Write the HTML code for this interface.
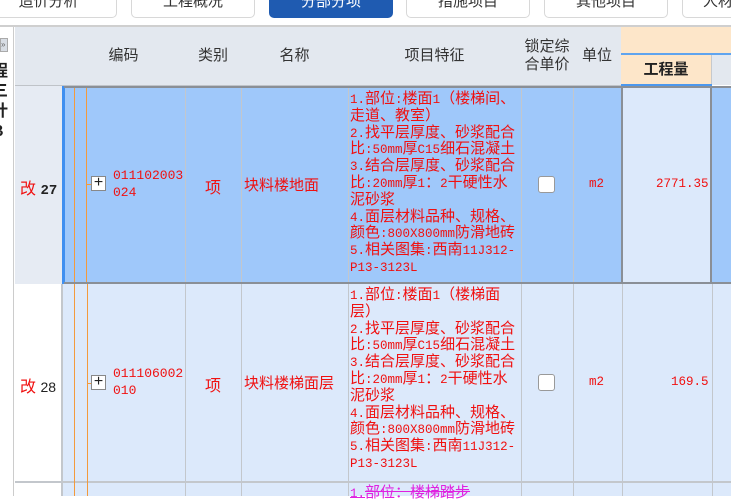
<!DOCTYPE html>
<html><head><meta charset="utf-8"><style>
*{margin:0;padding:0;box-sizing:border-box}
body{width:731px;height:496px;overflow:hidden;background:#fff;position:relative;font-family:"Liberation Sans","Noto Sans CJK SC",sans-serif}
.a{position:absolute}
.tab{position:absolute;top:-12px;height:30px;border:1px solid #d8d8d8;border-radius:5px;background:#fff;font-size:15px;color:#333;text-align:center;line-height:26px}
.hd{position:absolute;background:#e3e8ef;border-right:1px solid #c6c9cd;border-bottom:1px solid #bfc3c8;color:#333;font-size:15px;display:flex;align-items:center;justify-content:center;text-align:center;line-height:18px}
.vl{position:absolute;width:1px;background:#c3c7cc}
.red{color:#f01010}
.ft{position:absolute;left:350px;font-size:15px;color:#f01010;white-space:nowrap;font-family:"Noto Sans CJK SC",sans-serif}
.ft div{height:16.8px;line-height:16.8px;overflow:visible}
.ft i{font-style:normal;font-family:"Liberation Mono",monospace;font-size:12.5px;line-height:10px}
.or{position:absolute;width:1px;background:#f39a3c}
.pb{position:absolute;width:15px;height:15px;border:1px solid #888;background:#fff;font-size:16px;line-height:12px;text-align:center;color:#222}
.cb{position:absolute;width:17px;height:17px;border:1px solid #999;border-radius:3px;background:#fff}
.code{font-family:"Liberation Mono",monospace;font-size:13px;line-height:17px}
</style></head><body>
<div class="tab" style="left:-20px;width:137px">造价分析</div>
<div class="tab" style="left:131px;width:124px">工程概况</div>
<div class="tab" style="left:269px;width:124px;background:#1f5bb1;border-color:#1f5bb1;color:#fff">分部分项</div>
<div class="tab" style="left:406px;width:124px">措施项目</div>
<div class="tab" style="left:544px;width:124px">其他项目</div>
<div class="tab" style="left:682px;width:80px;text-align:left;padding-left:20px">人材</div>
<div class="a" style="left:0;top:25px;width:731px;height:2px;background:#cfcfcf"></div>
<div class="a" style="left:0;top:27px;width:14px;height:469px;background:#fff;border-right:1px solid #ccc"></div>
<div class="a" style="left:0;top:38px;width:8px;height:14px;background:#d8dde4;border:1px solid #aaa;font-size:8px;color:#666;line-height:12px">»</div>
<div class="a" style="left:-8px;top:62px;width:16px;font-size:16px;font-weight:bold;line-height:20px;color:#222">程<br>三<br>计<br>B</div>
<div class="hd" style="left:15px;top:27px;width:48px;height:59px"></div>
<div class="hd" style="left:62px;top:27px;width:124px;height:59px">编码</div>
<div class="hd" style="left:185px;top:27px;width:57px;height:59px">类别</div>
<div class="hd" style="left:241px;top:27px;width:108px;height:59px">名称</div>
<div class="hd" style="left:348px;top:27px;width:174px;height:59px">项目特征</div>
<div class="hd" style="left:521px;top:27px;width:53px;height:59px">锁定综<br>合单价</div>
<div class="hd" style="left:573px;top:27px;width:49px;height:59px">单位</div>
<div class="a" style="left:621px;top:27px;width:110px;height:27px;background:#fde6c9"></div>
<div class="a" style="left:621px;top:53px;width:110px;height:2px;background:#5fa4ef"></div>
<div class="a" style="left:621px;top:55px;width:91px;height:29px;background:#fde6c9;border-right:1px solid #c6c9cd;font-size:15px;font-weight:bold;color:#222;text-align:center;line-height:29px">工程量</div>
<div class="a" style="left:712px;top:55px;width:19px;height:30px;background:#e3e8ef"></div>
<div class="a" style="left:621px;top:84px;width:91px;height:3px;background:#4c98ee"></div>
<!-- row 1 -->
<div class="a" style="left:15px;top:86px;width:48px;height:198px;background:#e6ebf3;border-right:1px solid #c3c7cc"></div>
<div class="a" style="left:62px;top:86px;width:669px;height:198px;background:#9fc8fa"></div>
<div class="a" style="left:62px;top:86px;width:3px;height:198px;background:#3f8ff0"></div>
<div class="a" style="left:64px;top:86px;width:667px;height:2px;background:#8a8f96"></div>
<div class="a" style="left:64px;top:282px;width:667px;height:2px;background:#8a8f96"></div>
<div class="a" style="left:621px;top:86px;width:91px;height:198px;background:#dce9fb;border:2px solid #8a8f96"></div>
<div class="vl" style="left:185px;top:88px;height:194px"></div>
<div class="vl" style="left:241px;top:88px;height:194px"></div>
<div class="vl" style="left:348px;top:88px;height:194px"></div>
<div class="vl" style="left:521px;top:88px;height:194px"></div>
<div class="vl" style="left:573px;top:88px;height:194px"></div>
<div class="or" style="left:74px;top:88px;height:194px"></div>
<div class="or" style="left:86px;top:88px;height:194px"></div>
<div class="a" style="left:86px;top:184px;width:6px;height:1px;background:#f39a3c"></div>
<div class="pb" style="left:91px;top:176px">+</div>
<div class="a red" style="left:20px;top:175px;font-size:16px">改 <b style="color:#222;font-family:'Liberation Mono',monospace;font-size:14px">27</b></div>
<div class="a red code" style="left:113px;top:167px">011102003<br>024</div>
<div class="a red" style="left:205px;top:174px;font-size:16px">项</div>
<div class="a red" style="left:244px;top:174px;font-size:15px;font-family:'Noto Sans CJK SC',sans-serif">块料楼地面</div>
<div class="ft" style="top:90px"><div><i>1.</i>部位<i>:</i>楼面<i>1</i>（楼梯间、</div><div>走道、教室）</div><div><i>2.</i>找平层厚度、砂浆配合</div><div>比<i>:50mm</i>厚<i>C15</i>细石混凝土</div><div><i>3.</i>结合层厚度、砂浆配合</div><div>比<i>:20mm</i>厚<i>1</i>：<i>2</i>干硬性水</div><div>泥砂浆</div><div><i>4.</i>面层材料品种、规格、</div><div>颜色<i>:800X800mm</i>防滑地砖</div><div><i>5.</i>相关图集<i>:</i>西南<i>11J312-</i></div><div><i>P13-3123L</i></div></div>
<div class="cb" style="left:538px;top:176px"></div>
<div class="a red" style="left:589px;top:177px;font-size:12.5px;font-family:'Liberation Mono',monospace">m2</div>
<div class="a red" style="left:656px;top:177px;font-size:12.5px;font-family:'Liberation Mono',monospace">2771.35</div>
<!-- row 2 -->
<div class="a" style="left:15px;top:284px;width:48px;height:198px;background:#fff;border-right:2px solid #c3c7cc"></div>
<div class="a" style="left:63px;top:284px;width:668px;height:198px;background:#dce9fb"></div>
<div class="a" style="left:15px;top:481px;width:716px;height:2px;background:#c3c7cc"></div>
<div class="vl" style="left:185px;top:284px;height:212px"></div>
<div class="vl" style="left:241px;top:284px;height:212px"></div>
<div class="vl" style="left:348px;top:284px;height:212px"></div>
<div class="vl" style="left:521px;top:284px;height:212px"></div>
<div class="vl" style="left:573px;top:284px;height:212px"></div>
<div class="vl" style="left:622px;top:284px;height:212px"></div>
<div class="vl" style="left:712px;top:284px;height:212px"></div>
<div class="or" style="left:74px;top:284px;height:212px"></div>
<div class="or" style="left:87px;top:284px;height:212px"></div>
<div class="a" style="left:87px;top:383px;width:5px;height:1px;background:#f39a3c"></div>
<div class="pb" style="left:91px;top:375px">+</div>
<div class="a red" style="left:20px;top:373px;font-size:16px">改 <span style="color:#222;font-size:14px">28</span></div>
<div class="a red code" style="left:113px;top:365px">011106002<br>010</div>
<div class="a red" style="left:205px;top:372px;font-size:16px">项</div>
<div class="a red" style="left:244px;top:372px;font-size:15px;font-family:'Noto Sans CJK SC',sans-serif">块料楼梯面层</div>
<div class="ft" style="top:286px"><div><i>1.</i>部位<i>:</i>楼面<i>1</i>（楼梯面</div><div>层）</div><div><i>2.</i>找平层厚度、砂浆配合</div><div>比<i>:50mm</i>厚<i>C15</i>细石混凝土</div><div><i>3.</i>结合层厚度、砂浆配合</div><div>比<i>:20mm</i>厚<i>1</i>：<i>2</i>干硬性水</div><div>泥砂浆</div><div><i>4.</i>面层材料品种、规格、</div><div>颜色<i>:800X800mm</i>防滑地砖</div><div><i>5.</i>相关图集<i>:</i>西南<i>11J312-</i></div><div><i>P13-3123L</i></div></div>
<div class="cb" style="left:538px;top:374px"></div>
<div class="a red" style="left:589px;top:375px;font-size:12.5px;font-family:'Liberation Mono',monospace">m2</div>
<div class="a red" style="left:671px;top:375px;font-size:12.5px;font-family:'Liberation Mono',monospace">169.5</div>
<!-- row 3 -->
<div class="a" style="left:15px;top:483px;width:48px;height:13px;background:#fff;border-right:2px solid #c3c7cc"></div>
<div class="a" style="left:63px;top:483px;width:668px;height:13px;background:#dce9fb"></div>
<div class="or" style="left:74px;top:483px;height:13px"></div>
<div class="or" style="left:87px;top:483px;height:13px"></div>
<div class="vl" style="left:185px;top:483px;height:13px"></div>
<div class="vl" style="left:241px;top:483px;height:13px"></div>
<div class="vl" style="left:348px;top:483px;height:13px"></div>
<div class="vl" style="left:521px;top:483px;height:13px"></div>
<div class="vl" style="left:573px;top:483px;height:13px"></div>
<div class="vl" style="left:622px;top:483px;height:13px"></div>
<div class="vl" style="left:712px;top:483px;height:13px"></div>
<div class="ft" style="top:484px;color:#e020e0;text-decoration:line-through"><div><i>1.</i>部位：楼梯踏步</div></div>
</body></html>
